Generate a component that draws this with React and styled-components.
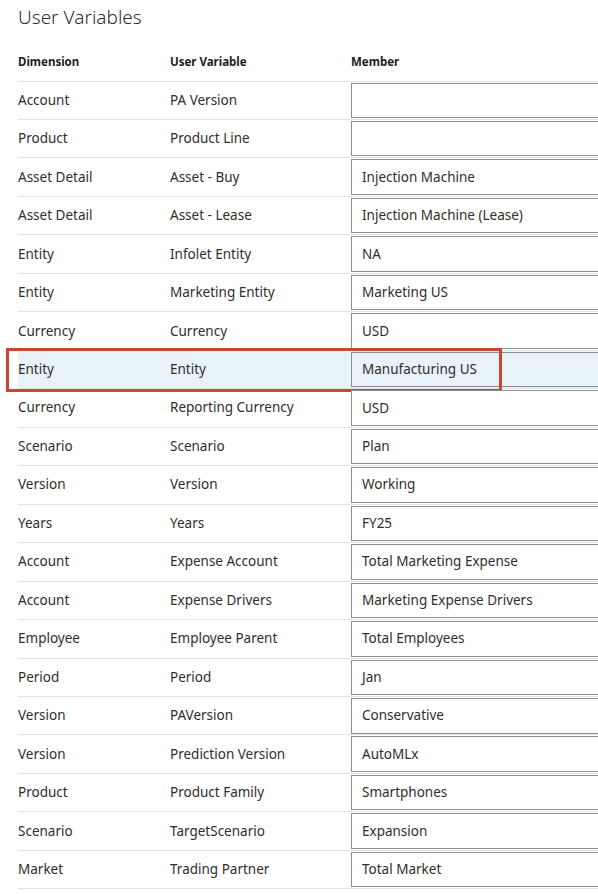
import React from 'react';
import styled, { createGlobalStyle } from 'styled-components';

const GlobalStyle = createGlobalStyle`
  html, body {
    margin: 0;
    padding: 0;
    background: #fff;
    overflow: hidden;
  }
  body {
    font-family: "Noto Sans", "Open Sans", sans-serif;
    color: #312d2a;
  }
`;

const Page = styled.div`
  padding: 4px 0 0 18px;
  width: 600px;
`;

const Title = styled.h1`
  margin: 0;
  font-size: 19px;
  font-weight: 300;
  line-height: 26px;
  color: #312d2a;
`;

const Table = styled.div`
  margin-top: 11.5px;
  width: 600px;
`;

const HeaderRow = styled.div`
  display: grid;
  grid-template-columns: 152px 181px 1fr;
  align-items: center;
  height: 39px;
  border-bottom: 1px solid #e3e3e3;
  font-size: 11.5px;
  font-weight: 700;
  color: #1f1c1a;
`;

const HeadCell = styled.div`
  white-space: nowrap;
`;

const Row = styled.div`
  position: relative;
  display: grid;
  grid-template-columns: 152px 181px 1fr;
  height: 38.48px;
  box-sizing: border-box;
  border-bottom: 1px solid #e3e3e3;
  background: ${(p) => (p.$active ? '#e7f2f9' : 'transparent')};
  font-size: 13.5px;
`;

const Cell = styled.div`
  display: flex;
  align-items: center;
  padding-bottom: 1px;
  white-space: nowrap;
`;

const MemberBox = styled.div`
  margin-top: 1px;
  height: 35.5px;
  box-sizing: border-box;
  border: 1px solid #8e8e8e;
  background: ${(p) => (p.$active ? '#e7f2f9' : '#fff')};
  padding: 0 0 1px 10px;
  display: flex;
  align-items: center;
  white-space: nowrap;
`;

const Focus = styled.div`
  position: absolute;
  left: -12px;
  top: -3px;
  width: 496px;
  height: 44px;
  box-sizing: border-box;
  border: 3px solid #c74634;
  pointer-events: none;
`;

const rows = [
  ['Account', 'PA Version', ''],
  ['Product', 'Product Line', ''],
  ['Asset Detail', 'Asset - Buy', 'Injection Machine'],
  ['Asset Detail', 'Asset - Lease', 'Injection Machine (Lease)'],
  ['Entity', 'Infolet Entity', 'NA'],
  ['Entity', 'Marketing Entity', 'Marketing US'],
  ['Currency', 'Currency', 'USD'],
  ['Entity', 'Entity', 'Manufacturing US'],
  ['Currency', 'Reporting Currency', 'USD'],
  ['Scenario', 'Scenario', 'Plan'],
  ['Version', 'Version', 'Working'],
  ['Years', 'Years', 'FY25'],
  ['Account', 'Expense Account', 'Total Marketing Expense'],
  ['Account', 'Expense Drivers', 'Marketing Expense Drivers'],
  ['Employee', 'Employee Parent', 'Total Employees'],
  ['Period', 'Period', 'Jan'],
  ['Version', 'PAVersion', 'Conservative'],
  ['Version', 'Prediction Version', 'AutoMLx'],
  ['Product', 'Product Family', 'Smartphones'],
  ['Scenario', 'TargetScenario', 'Expansion'],
  ['Market', 'Trading Partner', 'Total Market'],
];

export default function App() {
  return (
    <>
      <GlobalStyle />
      <Page>
        <Title>User Variables</Title>
        <Table>
          <HeaderRow>
            <HeadCell>Dimension</HeadCell>
            <HeadCell>User Variable</HeadCell>
            <HeadCell>Member</HeadCell>
          </HeaderRow>
          {rows.map(([dim, variable, member], i) => {
            const active = i === 7;
            return (
              <Row key={i} $active={active}>
                <Cell>{dim}</Cell>
                <Cell>{variable}</Cell>
                <MemberBox $active={active}>{member}</MemberBox>
                {active && <Focus />}
              </Row>
            );
          })}
        </Table>
      </Page>
    </>
  );
}
